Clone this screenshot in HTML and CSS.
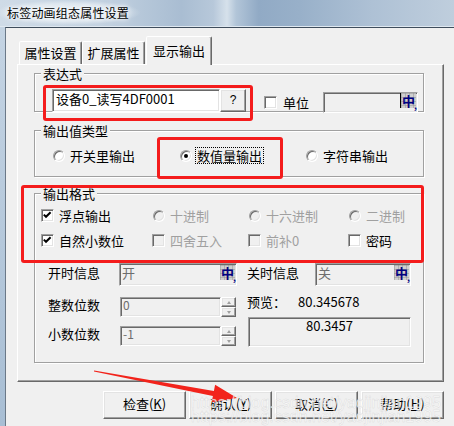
FILE: index.html
```html
<!DOCTYPE html>
<html lang="zh">
<head>
<meta charset="utf-8">
<title>标签动画组态属性设置</title>
<link rel="stylesheet" href="styles.css">
</head>
<body>
<div class="window">
  <div class="titlebar"><span class="title">标签动画组态属性设置</span></div>
  <div class="client">
    <div class="tabs">
      <div class="tab">属性设置</div>
      <div class="tab">扩展属性</div>
      <div class="tab sel">显示输出</div>
    </div>
    <div class="panel">
      <div class="grp g1">
        <div class="legend">表达式</div>
        <div class="r-expr">
          <div class="edit expr">设备0_读写4DF0001</div>
          <div class="btn qbtn">?</div>
          <span class="chk unitchk"></span>
          <span class="unitlbl">单位</span>
          <div class="edit unit"><span class="ime caret">中<i>,</i></span></div>
        </div>
      </div>

      <div class="grp g2">
        <div class="legend">输出值类型</div>
        <div class="r-type">
          <div class="opt o1"><span class="radio"></span><span class="ol">开关里输出</span></div>
          <div class="opt o2"><span class="radio on"></span><span class="focus">数值量输出</span></div>
          <div class="opt o3"><span class="radio"></span><span class="ol">字符串输出</span></div>
        </div>
      </div>

      <div class="grp g3">
        <div class="legend">输出格式</div>
        <div class="fr fr1">
          <div class="opt"><span class="chk"><svg width="11" height="11" viewBox="0 0 11 11"><polyline points="1.8,4.6 4,6.8 8.6,2.2" fill="none" stroke="#000" stroke-width="2"/></svg></span><span class="ol">浮点输出</span></div>
          <div class="opt dis"><span class="radio off rr"></span><span class="ol">十进制</span></div>
          <div class="opt dis"><span class="radio off rr"></span><span class="ol">十六进制</span></div>
          <div class="opt dis"><span class="radio off rr"></span><span class="ol">二进制</span></div>
        </div>
        <div class="fr fr2">
          <div class="opt"><span class="chk"><svg width="11" height="11" viewBox="0 0 11 11"><polyline points="1.8,4.6 4,6.8 8.6,2.2" fill="none" stroke="#000" stroke-width="2"/></svg></span><span class="ol">自然小数位</span></div>
          <div class="opt dis"><span class="chk off"></span><span class="ol">四舍五入</span></div>
          <div class="opt dis"><span class="chk off"></span><span class="ol">前补0</span></div>
          <div class="opt"><span class="chk"></span><span class="ol">密码</span></div>
        </div>
        <div class="info">
          <span class="il">开时信息</span>
          <div class="edit ro on-ed"><span>开</span><span class="ime">中<i>,</i></span></div>
          <span class="il il2">关时信息</span>
          <div class="edit ro off-ed"><span>关</span><span class="ime">中<i>,</i></span></div>
        </div>
        <div class="lower">
          <div class="lcol">
            <div class="spinrow">
              <span class="sl">整数位数</span>
              <div class="edit ro sed">0</div>
              <div class="spin"><b class="btn"><em class="up"></em></b><b class="btn"><em class="dn"></em></b></div>
            </div>
            <div class="spinrow">
              <span class="sl">小数位数</span>
              <div class="edit ro sed">-1</div>
              <div class="spin"><b class="btn"><em class="up"></em></b><b class="btn"><em class="dn"></em></b></div>
            </div>
          </div>
          <div class="rcol">
            <div class="pv">预览：<span class="pvnum">80.345678</span></div>
            <div class="edit ro pbox">80.3457</div>
          </div>
        </div>
      </div>
    </div>
    <div class="btns">
      <div class="btn dbtn">检查(<u>K</u>)</div>
      <div class="btn dbtn">确认(<u>Y</u>)</div>
      <div class="btn dbtn">取消(<u>C</u>)</div>
      <div class="btn dbtn">帮助(<u>H</u>)</div>
    </div>
  </div>

  <div class="mark m1"></div>
  <div class="mark m2"></div>
  <div class="mark m3"></div>
  <svg class="arrow" width="454" height="426" viewBox="0 0 454 426">
    <polygon fill="#f2231b" points="94.1,370.4 213.9,391.0 215.1,384.7 237,398 211.7,402.3 212.9,396.0 93.9,371.6"/>
  </svg>
  <div class="wm w1">https://blog.csdn.net/yaojinjian1995</div>
  <div class="wm w2">https://blog.csdn.net/yaojinjian1995</div>
</div>
</body>
</html>
```

FILE: styles.css
```css
* { box-sizing: border-box; }
html, body { margin: 0; padding: 0; }
body {
  width: 454px;
  height: 426px;
  overflow: hidden;
  font-family: "Noto Sans CJK SC", "Noto Sans", sans-serif;
  font-size: 13px;
  color: #000;
}
.window {
  position: relative;
  width: 454px;
  height: 426px;
  overflow: hidden;
  background: linear-gradient(180deg, #c6d5e4, #a8bed4);
}
.titlebar {
  height: 27px;
  padding-left: 7px;
  border-bottom: 1px solid #dfe8f0;
  background: linear-gradient(90deg, #cfdbe7 0%, #c3d2e1 22%, #a9bdd2 40%, #b7c8da 47%, #d6e1eb 50%, #b2c5d8 52%, #91aac5 57%, #98b0c9 66%, #aec1d5 82%, #bfcedd 100%);
}
.title {
  display: inline-block;
  font-size: 12px;
  line-height: 25px;
  letter-spacing: 0.2px;
  padding: 0 12px;
  margin-left: -12px;
  background: radial-gradient(closest-side, rgba(236, 242, 247, 0.95), rgba(236, 242, 247, 0.6) 70%, rgba(236, 242, 247, 0));
  text-shadow: 0 0 4px #fff, 0 0 8px #fff;
}
.client {
  margin-left: 5px;
  height: 399px;
  border-top: 1px solid #3f4d5c;
  border-left: 1px solid #6b7988;
  background: #f0f0f0;
}
.tabs {
  display: flex;
  align-items: flex-end;
  height: 36px;
  padding-left: 13px;
}
.tab {
  width: 63px;
  height: 23px;
  line-height: 21px;
  text-align: center;
  border: 1px solid;
  border-bottom: 0;
  border-color: #fff #696969 transparent #fff;
  border-radius: 2px 2px 0 0;
  box-shadow: inset -1px 0 0 #a0a0a0;
  background: #f0f0f0;
}
.tab.sel {
  position: relative;
  z-index: 1;
  width: 66px;
  height: 29px;
  margin-left: 1px;
  margin-bottom: -1px;
  padding-top: 1px;
  line-height: 25px;
}
.panel {
  margin-left: 11px;
  width: 427px;
  height: 318px;
  border: 1px solid;
  border-color: #fff #696969 #696969 #fff;
  box-shadow: inset -1px -1px 0 #a0a0a0;
  padding: 0 19px 0 16px;
}
.grp {
  border: 1px solid #a0a0a0;
  box-shadow: 1px 1px 0 #fff, inset 1px 1px 0 #fff;
}
.legend {
  width: fit-content;
  margin: -8px 0 0 6px;
  padding: 0 2px;
  line-height: 15px;
  background: #f0f0f0;
}
.g1 { margin-top: 8px; height: 39px; }
.g2 { margin-top: 18px; height: 47px; }
.g3 { margin-top: 16px; height: 170px; }

.edit {
  border: 1px solid;
  border-color: #a0a0a0 #fff #fff #a0a0a0;
  box-shadow: inset 1px 1px 0 #696969, inset -1px -1px 0 #e3e3e3;
  background: #fff;
}
.edit.ro { background: #f0f0f0; color: #6d6d6d; }
.btn {
  border: 1px solid;
  border-color: #fff #696969 #696969 #fff;
  box-shadow: inset -1px -1px 0 #a0a0a0, inset 1px 1px 0 #e3e3e3;
  background: #f0f0f0;
}
.chk {
  flex: none;
  width: 13px;
  height: 13px;
  display: flex;
  align-items: center;
  justify-content: center;
  border: 1px solid;
  border-color: #a0a0a0 #fff #fff #a0a0a0;
  box-shadow: inset 1px 1px 0 #696969, inset -1px -1px 0 #e3e3e3;
  background: #fff;
}
.chk.off { background: #f0f0f0; }
.radio {
  flex: none;
  width: 12px;
  height: 12px;
  border-radius: 50%;
  display: flex;
  align-items: center;
  justify-content: center;
  border: 1px solid;
  border-color: #a0a0a0 #fff #fff #a0a0a0;
  box-shadow: inset 1px 1px 0 #696969, inset -1px -1px 0 #e3e3e3;
  background: #fff;
}
.radio.on::after {
  content: "";
  width: 4px;
  height: 4px;
  border-radius: 50%;
  background: #000;
}
.radio.off { background: #f0f0f0; }
.radio.rr { margin-left: 1px; }
.ime {
  position: relative;
  flex: none;
  width: 15px;
  height: 15px;
  font-size: 13px;
  line-height: 15px;
  font-weight: bold;
  text-align: center;
  color: #000080;
  background-color: #cfcfcf;
  background-image: linear-gradient(90deg, rgba(140, 140, 140, 0.45) 1px, transparent 1px), linear-gradient(rgba(140, 140, 140, 0.45) 1px, transparent 1px);
  background-size: 4px 4px;
}
.ime i {
  position: absolute;
  right: -1px;
  bottom: -2px;
  font-size: 9px;
  line-height: 9px;
  font-style: normal;
}
.ime.caret { border-left: 1px solid #000; width: 16px; }

/* group 1 */
.r-expr {
  display: flex;
  align-items: flex-start;
  margin: 8px 0 0 17px;
}
.expr {
  width: 168px;
  height: 23px;
  padding: 0 3px;
  line-height: 17px;
  white-space: nowrap;
}
.qbtn {
  width: 26px;
  height: 23px;
  line-height: 20px;
  text-align: center;
  font-family: "Liberation Sans", sans-serif;
  font-size: 12px;
}
.unitchk { margin: 7px 0 0 18px; }
.unitlbl { margin: 6px 0 0 6px; line-height: 15px; }
.unit {
  width: 95px;
  height: 21px;
  margin: 3px 0 0 14px;
  background: #f0f0f0;
  display: flex;
  justify-content: flex-end;
  padding: 0 1px 0 0;
}

/* group 2 */
.r-type {
  display: flex;
  align-items: center;
  height: 17px;
  margin: 9px 0 0 18px;
}
.opt { display: flex; align-items: center; white-space: nowrap; }
.o1 { width: 127px; }
.o2 { width: 126px; }
.ol { margin-left: 5px; line-height: 15px; }
.focus {
  margin-left: 3px;
  border: 1px dotted #000;
  padding: 0 1px;
  line-height: 15px;
}
.dis { color: #a0a0a0; }

/* group 3 */
.fr {
  display: grid;
  grid-template-columns: 111px 96px 100px 1fr;
  align-items: center;
  height: 13px;
  margin-left: 6px;
}
.fr1 { margin-top: 7px; }
.fr2 { margin-top: 12px; }
.info {
  display: flex;
  align-items: flex-start;
  height: 23px;
  margin: 17px 0 0 13px;
}
.il { width: 71px; line-height: 20px; flex: none; }
.il2 { margin-left: 10px; width: 68px; }
.on-ed, .off-ed {
  height: 23px;
  display: flex;
  justify-content: space-between;
  align-items: flex-start;
  padding: 1px 1px 0 2px;
  line-height: 16px;
}
.on-ed { width: 118px; }
.off-ed { width: 96px; }
.lower { display: flex; margin-top: 8px; }
.lcol { margin-left: 13px; padding-top: 3px; }
.spinrow { display: flex; align-items: flex-start; height: 20px; }
.spinrow + .spinrow { margin-top: 9px; }
.sl { width: 72px; line-height: 16px; }
.sed {
  width: 101px;
  height: 20px;
  padding: 1px 2px 0;
  line-height: 12px;
  font-size: 12px;
}
.spin { width: 15px; height: 20px; display: flex; flex-direction: column; }
.spin b {
  flex: 1;
  display: flex;
  align-items: center;
  justify-content: center;
}
.spin em { width: 0; height: 0; border-left: 2.5px solid transparent; border-right: 2.5px solid transparent; }
.spin em.up { border-bottom: 3px solid #a0a0a0; }
.spin em.dn { border-top: 3px solid #a0a0a0; }
.rcol { margin-left: 11px; }
.pv { height: 16px; line-height: 16px; white-space: nowrap; }
.pvnum { margin-left: 12px; }
.edit.pbox {
  margin: 7px 0 0 1px;
  width: 163px;
  height: 30px;
  padding-top: 1px;
  line-height: 14px;
  text-align: center;
  color: #000;
}

/* dialog buttons */
.btns {
  display: flex;
  justify-content: flex-end;
  gap: 3px;
  width: 427px;
  margin: 9px 0 0 11px;
}
.dbtn {
  width: 83px;
  height: 28px;
  line-height: 24px;
  text-align: center;
}

/* annotations */
.mark {
  position: absolute;
  border: 3px solid #f41c1c;
  border-radius: 3px;
}
.m1 { left: 43px; top: 85px; width: 210px; height: 36px; }
.m2 { left: 157px; top: 137px; width: 126px; height: 42px; }
.m3 { left: 21px; top: 185px; width: 403px; height: 78px; }
.arrow { position: absolute; left: 0; top: 0; pointer-events: none; }
.wm {
  position: absolute;
  left: 191px;
  font-family: "Liberation Sans", sans-serif;
  font-size: 16px;
  white-space: nowrap;
  color: rgba(255, 255, 255, 0.75);
  -webkit-text-stroke: 0.5px rgba(170, 170, 170, 0.35);
}
.w1 { top: 394px; }
.w2 { top: 408px; }
```
